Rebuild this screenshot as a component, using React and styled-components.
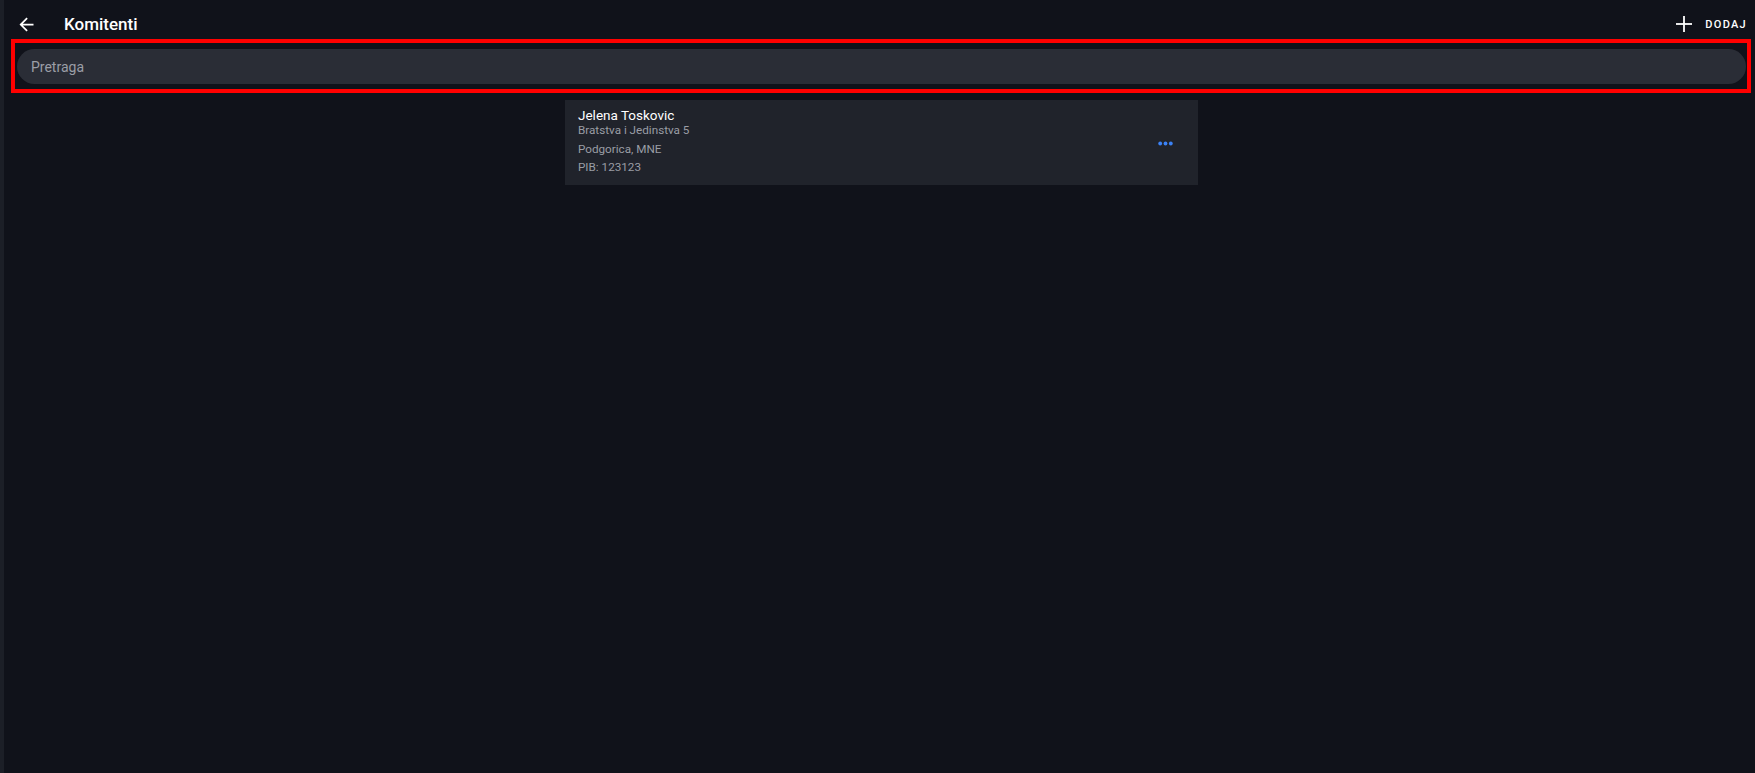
import React from "react";
import styled, { createGlobalStyle } from "styled-components";

const GlobalStyle = createGlobalStyle`
  html, body {
    margin: 0;
    padding: 0;
    background: #10121a;
    font-family: Roboto, "Noto Sans", "Liberation Sans", sans-serif;
    color: #ffffff;
  }
  * {
    box-sizing: border-box;
  }
`;

const clients = [
  {
    id: 1,
    name: "Jelena Toskovic",
    address: "Bratstva i Jedinstva 5",
    city: "Podgorica, MNE",
    pib: "123123",
  },
];

function BackIcon() {
  return (
    <svg width="21" height="21" viewBox="0 0 24 24" fill="#ffffff">
      <path d="M20 11H7.83l5.59-5.59L12 4l-8 8 8 8 1.41-1.41L7.83 13H20v-2z" />
    </svg>
  );
}

function PlusIcon() {
  return (
    <svg width="18" height="18" viewBox="0 0 18 18" stroke="#ffffff" strokeWidth="1.8">
      <line x1="9" y1="1" x2="9" y2="17" />
      <line x1="1" y1="9" x2="17" y2="9" />
    </svg>
  );
}

function DotsIcon() {
  return (
    <svg width="15" height="5" viewBox="0 0 15 5" fill="#3b82f6">
      <circle cx="2.2" cy="2.5" r="1.9" />
      <circle cx="7.5" cy="2.5" r="1.9" />
      <circle cx="12.8" cy="2.5" r="1.9" />
    </svg>
  );
}

function App() {
  return (
    <>
      <GlobalStyle />
      <Page>
        <Header>
          <IconButton aria-label="back">
            <BackIcon />
          </IconButton>
          <Title>Komitenti</Title>
          <AddButton>
            <PlusIcon />
            <AddLabel>Dodaj</AddLabel>
          </AddButton>
        </Header>

        <SearchFrame>
          <SearchInput placeholder="Pretraga" />
        </SearchFrame>

        <List>
          {clients.map((c) => (
            <Card key={c.id}>
              <Info>
                <Name>{c.name}</Name>
                <Detail>{c.address}</Detail>
                <Detail>{c.city}</Detail>
                <Detail>PIB: {c.pib}</Detail>
              </Info>
              <MoreButton aria-label="more">
                <DotsIcon />
              </MoreButton>
            </Card>
          ))}
        </List>
      </Page>
    </>
  );
}

const Page = styled.div`
  min-height: 100vh;
  border-left: 4px solid #1c1f27;
  display: flex;
  flex-direction: column;
`;

const Header = styled.header`
  height: 39px;
  padding: 9px 8px 0 12px;
  display: flex;
  align-items: center;
`;

const IconButton = styled.button`
  background: none;
  border: none;
  padding: 0;
  width: 21px;
  height: 21px;
  display: flex;
  align-items: center;
  justify-content: center;
  cursor: pointer;
`;

const Title = styled.h1`
  margin: 0 0 0 27px;
  font-size: 17px;
  font-weight: 500;
  color: #ffffff;
  line-height: 22px;
`;

const AddButton = styled.button`
  margin-left: auto;
  background: none;
  border: none;
  padding: 0;
  display: flex;
  align-items: center;
  gap: 12px;
  cursor: pointer;
  color: #ffffff;
`;

const AddLabel = styled.span`
  font-family: Roboto, "Liberation Sans", sans-serif;
  font-size: 11px;
  font-weight: 500;
  letter-spacing: 1.3px;
  text-transform: uppercase;
`;

const SearchFrame = styled.div`
  margin: 0 4px 0 7px;
  border: 4px solid #ff0000;
  padding: 6px 1px 5px 2px;
`;

const SearchInput = styled.input`
  width: 100%;
  height: 35px;
  border: none;
  outline: none;
  border-radius: 18px;
  background: #2a2d36;
  padding: 0 14px;
  font-family: Roboto, "Liberation Sans", sans-serif;
  font-size: 14px;
  color: #ffffff;

  &::placeholder {
    color: #9b9ea6;
  }
`;

const List = styled.main`
  padding: 7px 0 0 4px;
  display: flex;
  flex-direction: column;
  align-items: center;
`;

const Card = styled.div`
  width: 633px;
  height: 85px;
  background: #20232b;
  padding: 10px 25px 9px 13px;
  display: flex;
  align-items: center;
  justify-content: space-between;
`;

const Info = styled.div`
  display: flex;
  flex-direction: column;
`;

const Name = styled.div`
  font-size: 13.5px;
  line-height: 12px;
  color: #ffffff;
`;

const Detail = styled.div`
  font-size: 11.7px;
  line-height: 18.7px;
  color: #9a9da5;
`;

const MoreButton = styled.button`
  background: none;
  border: none;
  padding: 0;
  display: flex;
  cursor: pointer;
`;

export default App;
